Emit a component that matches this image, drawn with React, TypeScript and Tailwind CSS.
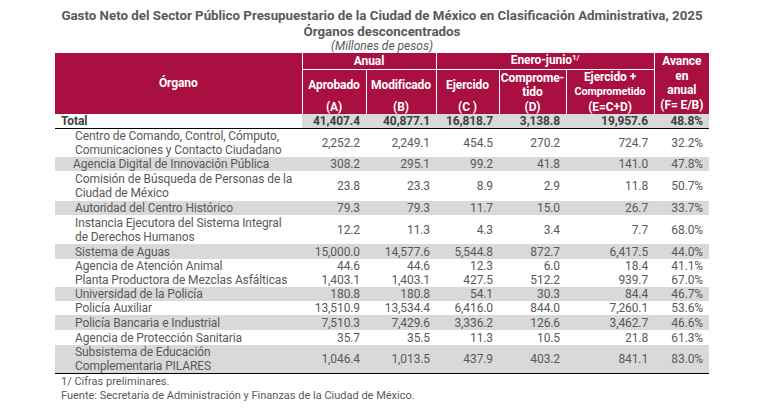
import React from "react";

type Row = { name: string[]; v: string[]; gray: boolean; h: number; indent?: string };

const rows: Row[] = [
  { name: ["Centro de Comando, Control, Cómputo,", "Comunicaciones y Contacto Ciudadano"], v: ["2,252.2", "2,249.1", "454.5", "270.2", "724.7", "32.2%"], gray: false, h: 28 },
  { name: ["Agencia Digital de Innovación Pública"], v: ["308.2", "295.1", "99.2", "41.8", "141.0", "47.8%"], gray: true, h: 14, indent: "pl-[18px]" },
  { name: ["Comisión de Búsqueda de Personas de la", "Ciudad de México"], v: ["23.8", "23.3", "8.9", "2.9", "11.8", "50.7%"], gray: false, h: 30 },
  { name: ["Autoridad del Centro Histórico"], v: ["79.3", "79.3", "11.7", "15.0", "26.7", "33.7%"], gray: true, h: 14 },
  { name: ["Instancia Ejecutora del Sistema Integral", "de Derechos Humanos"], v: ["12.2", "11.3", "4.3", "3.4", "7.7", "68.0%"], gray: false, h: 29 },
  { name: ["Sistema de Aguas"], v: ["15,000.0", "14,577.6", "5,544.8", "872.7", "6,417.5", "44.0%"], gray: true, h: 15 },
  { name: ["Agencia de Atención Animal"], v: ["44.6", "44.6", "12.3", "6.0", "18.4", "41.1%"], gray: false, h: 14 },
  { name: ["Planta Productora de Mezclas Asfálticas"], v: ["1,403.1", "1,403.1", "427.5", "512.2", "939.7", "67.0%"], gray: false, h: 14 },
  { name: ["Universidad de la Policía"], v: ["180.8", "180.8", "54.1", "30.3", "84.4", "46.7%"], gray: true, h: 14 },
  { name: ["Policía Auxiliar"], v: ["13,510.9", "13,534.4", "6,416.0", "844.0", "7,260.1", "53.6%"], gray: false, h: 14 },
  { name: ["Policía Bancaria e Industrial"], v: ["7,510.3", "7,429.6", "3,336.2", "126.6", "3,462.7", "46.6%"], gray: true, h: 15 },
  { name: ["Agencia de Protección Sanitaria"], v: ["35.7", "35.5", "11.3", "10.5", "21.8", "61.3%"], gray: false, h: 15 },
  { name: ["Subsistema de Educación", "Complementaria PILARES"], v: ["1,046.4", "1,013.5", "437.9", "403.2", "841.1", "83.0%"], gray: true, h: 28 },
];

const widths = [247, 64, 70, 63, 67, 88, 55];

export default function App() {
  return (
    <div className="w-[771px] h-[417px] bg-white overflow-hidden" style={{ fontFamily: "Roboto, 'Liberation Sans', sans-serif" }}>
      <div className="w-[654px] ml-[55px]">
        <div className="pt-[8px] text-center text-[#595959]">
          <div className="font-bold text-[13.3px] leading-[16px] whitespace-nowrap -mx-[4px]">
            Gasto Neto del Sector Público Presupuestario de la Ciudad de México en Clasificación Administrativa, 2025
          </div>
          <div className="font-bold text-[13.3px] leading-[16px]">Órganos desconcentrados</div>
          <div className="italic text-[12px] leading-[13px]">(Millones de pesos)</div>
        </div>
        <table className="table-fixed border-collapse w-[654px]">
          <colgroup>
            {widths.map((w, i) => (
              <col key={i} style={{ width: w }} />
            ))}
          </colgroup>
          <thead className="bg-[#a90f40] text-white font-bold text-[12px] tracking-[-0.1px]">
            <tr className="h-[15px]">
              <th rowSpan={3} className="p-0 border-r border-white font-bold">Órgano</th>
              <th colSpan={2} className="p-0 leading-[14px] border-r border-b border-white font-bold">Anual</th>
              <th colSpan={3} className="p-0 leading-[14px] border-r border-b border-white font-bold">
                Enero-junio<span className="relative -top-[4px] text-[8px]">1/</span>
              </th>
              <th rowSpan={3} className="p-0 leading-[14.5px] font-bold">
                Avance
                <br />
                en
                <br />
                anual
                <br />
                (F= E/B)
              </th>
            </tr>
            <tr className="h-[30px]">
              <th className="p-0 border-r border-white font-bold leading-[14px]">Aprobado</th>
              <th className="p-0 border-r border-white font-bold leading-[14px]">Modificado</th>
              <th className="p-0 border-r border-white font-bold leading-[14px]">Ejercido</th>
              <th className="p-0 border-r border-white font-bold leading-[14px] whitespace-nowrap">
                Comprome-
                <br />
                tido
              </th>
              <th className="p-0 border-r border-white font-bold leading-[14px]">
                Ejercido +
                <br />
                <span className="text-[10.8px]">Comprometido</span>
              </th>
            </tr>
            <tr className="h-[14px]">
              <th className="p-0 border-r border-white font-bold leading-[14px]">(A)</th>
              <th className="p-0 border-r border-white font-bold leading-[14px]">(B)</th>
              <th className="p-0 border-r border-white font-bold leading-[14px]">(C )</th>
              <th className="p-0 border-r border-white font-bold leading-[14px]">(D)</th>
              <th className="p-0 border-r border-white font-bold leading-[14px]">(E=C+D)</th>
            </tr>
          </thead>
          <tbody className="text-[12px] tracking-[-0.1px]">
            <tr className="h-[15px] border-b-[1.5px] border-black">
              <td className="p-0 pl-[6px] font-bold text-[#404040] leading-[14px]">Total</td>
              {["41,407.4", "40,877.1", "16,818.7", "3,138.8", "19,957.6", "48.8%"].map((x, i) => (
                <td key={i} className="p-0 pr-[6px] text-right font-bold text-[#404040] bg-[#d9d9d9] leading-[14px]">
                  {x}
                </td>
              ))}
            </tr>
            {rows.map((r, idx) => (
              <tr
                key={idx}
                className={`${r.gray ? "bg-[#d9d9d9]" : "bg-white"} ${idx === rows.length - 1 ? "border-b-[1.5px] border-black" : ""}`}
                style={{ height: r.h }}
              >
                <td className={`p-0 ${r.indent ?? "pl-[20px]"} text-[#595959] leading-[14px] align-middle whitespace-nowrap`}>
                  {r.name.map((n, j) => (
                    <div key={j}>{n}</div>
                  ))}
                </td>
                {r.v.map((x, i) => (
                  <td key={i} className="p-0 pr-[6px] text-right text-[#595959] leading-[14px] align-middle">
                    {x}
                  </td>
                ))}
              </tr>
            ))}
          </tbody>
        </table>
        <div className="pl-[6px] text-[11px] leading-[13.5px] text-[#595959] pt-[1px]">
          <div>1/ Cifras preliminares.</div>
          <div>Fuente: Secretaría de Administración y Finanzas de la Ciudad de México.</div>
        </div>
      </div>
    </div>
  );
}
